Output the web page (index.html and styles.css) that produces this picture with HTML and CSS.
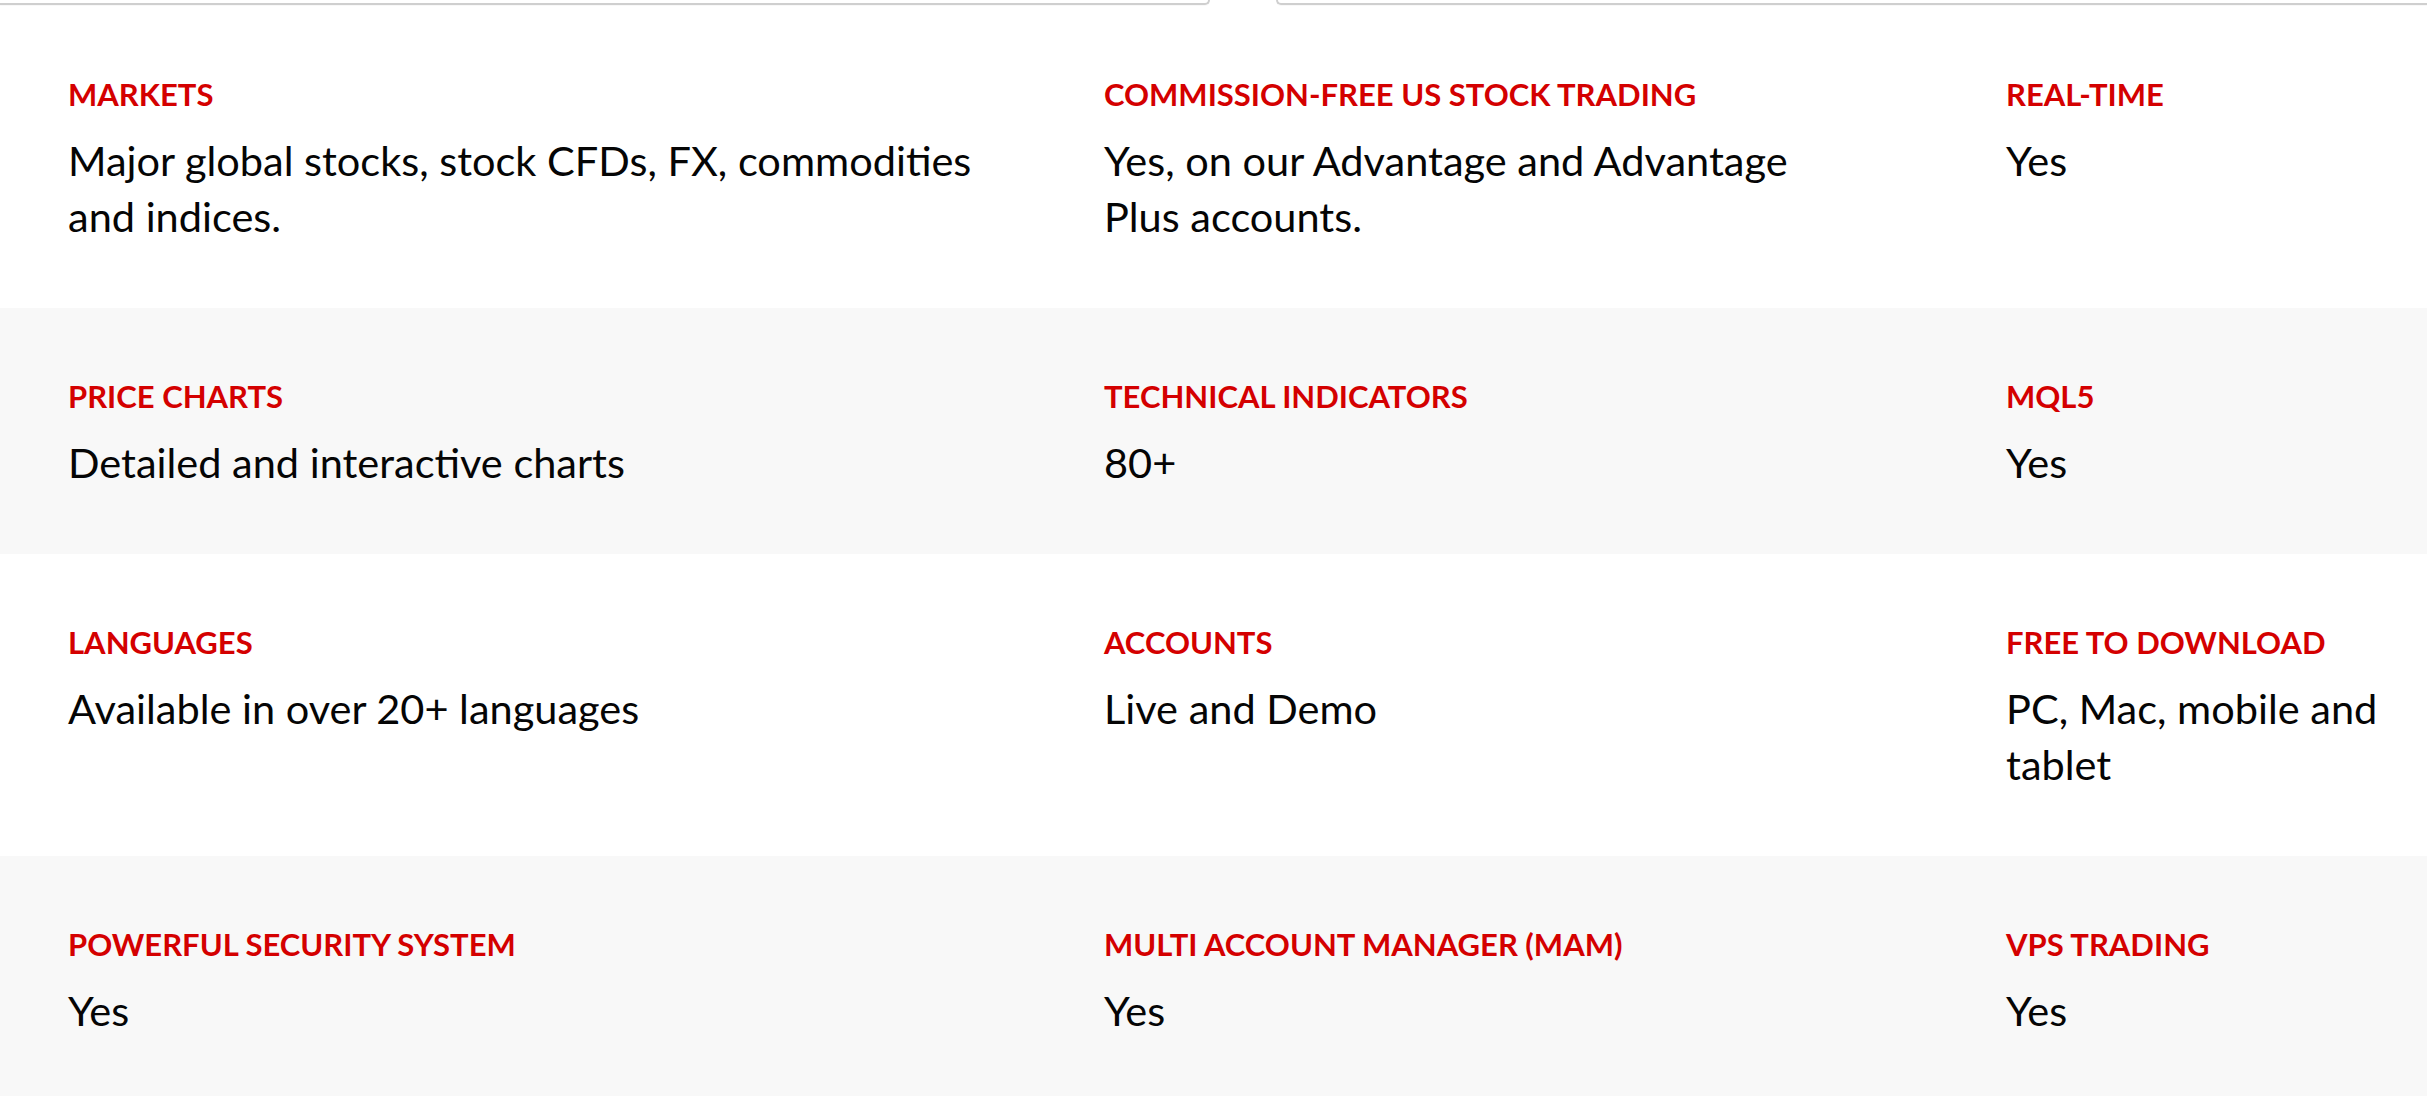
FILE: index.html
```html
<!DOCTYPE html>
<html lang="en">
<head>
<meta charset="utf-8">
<title>Platform features</title>
<link rel="stylesheet" href="styles.css">
</head>
<body>
<div class="tabline">
  <div class="tabline-left"></div>
  <div class="tabline-gap"></div>
  <div class="tabline-right"></div>
</div>
<section class="features">
  <div class="row">
    <div class="cell c1"><h3 class="label">MARKETS</h3><p class="value">Major global stocks, stock CFDs, FX, commodities and indices.</p></div>
    <div class="cell c2"><h3 class="label">COMMISSION-FREE US STOCK TRADING</h3><p class="value">Yes, on our Advantage and Advantage Plus accounts.</p></div>
    <div class="cell c3"><h3 class="label">REAL-TIME</h3><p class="value">Yes</p></div>
  </div>
  <div class="row alt">
    <div class="cell c1"><h3 class="label">PRICE CHARTS</h3><p class="value">Detailed and interactive charts</p></div>
    <div class="cell c2"><h3 class="label">TECHNICAL INDICATORS</h3><p class="value">80+</p></div>
    <div class="cell c3"><h3 class="label">MQL5</h3><p class="value">Yes</p></div>
  </div>
  <div class="row">
    <div class="cell c1"><h3 class="label">LANGUAGES</h3><p class="value">Available in over 20+ languages</p></div>
    <div class="cell c2"><h3 class="label">ACCOUNTS</h3><p class="value">Live and Demo</p></div>
    <div class="cell c3"><h3 class="label">FREE TO DOWNLOAD</h3><p class="value">PC, Mac, mobile and tablet</p></div>
  </div>
  <div class="row alt">
    <div class="cell c1"><h3 class="label">POWERFUL SECURITY SYSTEM</h3><p class="value">Yes</p></div>
    <div class="cell c2"><h3 class="label">MULTI ACCOUNT MANAGER (MAM)</h3><p class="value">Yes</p></div>
    <div class="cell c3"><h3 class="label">VPS TRADING</h3><p class="value">Yes</p></div>
  </div>
</section>
</body>
</html>
```
FILE: styles.css
```css
* { box-sizing: border-box; }
html, body { margin: 0; padding: 0; background: #ffffff; }
body {
  font-family: "Lato", "Open Sans", sans-serif;
  color: #050505;
  overflow: hidden;
}
.tabline {
  display: flex;
  height: 6px;
}
.tabline-left {
  width: 1210px;
  height: 5px;
  border-bottom: 2px solid #cfcfcf;
  border-right: 2px solid #cfcfcf;
  border-bottom-right-radius: 6px;
  box-shadow: 0 1px 1px rgba(0,0,0,0.03);
}
.tabline-gap { width: 66px; }
.tabline-right {
  flex: 1;
  height: 5px;
  border-bottom: 2px solid #cfcfcf;
  border-left: 2px solid #cfcfcf;
  border-bottom-left-radius: 6px;
  box-shadow: 0 1px 1px rgba(0,0,0,0.03);
}
.features { display: flex; flex-direction: column; }
.row {
  display: grid;
  grid-template-columns: 1036px 902px 1fr;
  padding: 68px 0 64px 68px;
  background: #ffffff;
}
.row.alt { background: #f8f8f8; }
.cell { min-width: 0; }
.c1 { padding-right: 96px; }
.c2 { padding-right: 160px; }
.c3 { padding-right: 10px; }
.label {
  margin: 0 0 18px 0;
  font-size: 31px;
  line-height: 40px;
  font-weight: 700;
  color: #d40000;
}
.value {
  margin: 0;
  font-size: 41.5px;
  line-height: 56px;
  font-weight: 400;
}
```
